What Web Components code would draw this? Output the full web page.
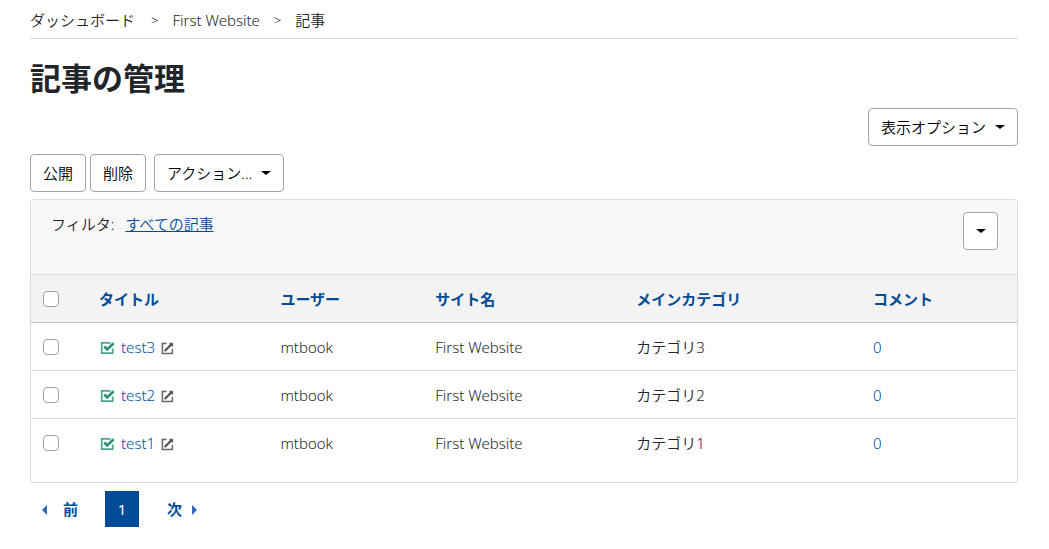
<!DOCTYPE html>
<html lang="ja">
<head>
<meta charset="utf-8">
<title>記事の管理</title>
<style>
  body {
    margin: 0;
    background: #fff;
    color: #212529;
    font: 350 15px/24px "Noto Sans", "Noto Sans CJK JP", sans-serif;
  }
</style>
</head>
<body>
<entry-page>
  <bread-crumbs slot="crumbs">
    <crumb-item href="#dashboard">ダッシュボード</crumb-item>
    <crumb-item href="#site">First Website</crumb-item>
    <crumb-item>記事</crumb-item>
  </bread-crumbs>
  <span slot="heading">記事の管理</span>
  <ui-button slot="options" caret>表示オプション</ui-button>
  <ui-button slot="actions">公開</ui-button>
  <ui-button slot="actions">削除</ui-button>
  <ui-button slot="actions" caret class="menu">アクション...</ui-button>
  <list-panel slot="list">
    <filter-bar slot="filter">すべての記事</filter-bar>
    <entry-table></entry-table>
  </list-panel>
  <page-nav slot="pager"></page-nav>
</entry-page>

<script>
  const define = (name, html, setup) => {
    const template = document.createElement('template');
    template.innerHTML = html;
    customElements.define(name, class extends HTMLElement {
      constructor() {
        super();
        this.attachShadow({ mode: 'open' }).append(template.content.cloneNode(true));
      }
      connectedCallback() {
        if (setup) setup(this, this.shadowRoot);
      }
    });
  };

  define('entry-page', `
    <style>
      :host { display: block; padding: 0 31px 20px 30px; }
      header { border-bottom: 1px solid #dcdcdc; padding: 8px 0 6px; }
      h1 { margin: 17px 0 7px; font-size: 31px; line-height: 45px; font-weight: 700; }
      .options { display: flex; justify-content: flex-end; margin-bottom: 8px; }
      .actions { display: flex; gap: 4px; margin-bottom: 7px; }
      ::slotted(.menu) { margin-left: 4px; }
      footer { margin-top: 8px; }
    </style>
    <header><slot name="crumbs"></slot></header>
    <main>
      <h1><slot name="heading"></slot></h1>
      <div class="options"><slot name="options"></slot></div>
      <div class="actions"><slot name="actions"></slot></div>
      <slot name="list"></slot>
    </main>
    <footer><slot name="pager"></slot></footer>`);

  define('bread-crumbs', `
    <style>
      :host { display: block; }
      nav { display: flex; }
    </style>
    <nav aria-label="パンくず"><slot></slot></nav>`);

  define('crumb-item', `
    <style>
      :host { display: flex; }
      a { color: inherit; text-decoration: none; }
      .sep { font-size: 13px; padding: 0 14px; }
      :host(:first-child) .sep { padding-left: 16px; }
      :host(:last-child) .sep { display: none; }
    </style>
    <a><slot></slot></a><span class="sep">&gt;</span>`,
    (host, root) => {
      if (host.hasAttribute('href')) root.querySelector('a').href = host.getAttribute('href');
    });

  define('ui-button', `
    <style>
      :host { display: block; }
      button {
        display: flex; align-items: center; justify-content: center; gap: 9px;
        height: 38px; min-width: 35px; padding: 0 12px; box-sizing: border-box;
        border: 1px solid #a6a6a6; border-radius: 4px;
        background: #fff; color: #000; font: inherit; white-space: nowrap; cursor: pointer;
      }
      .caret { display: none; border: 5px solid transparent; border-top: 4px solid #000; border-bottom: 0; }
      :host([caret]) .caret { display: block; }
      :host([icon]) button { padding: 0; }
      :host([icon]) slot { display: none; }
    </style>
    <button type="button"><slot></slot><span class="caret"></span></button>`,
    (host, root) => {
      const label = host.getAttribute('label');
      if (label) root.querySelector('button').setAttribute('aria-label', label);
    });

  define('list-panel', `
    <style>
      :host { display: block; border: 1px solid #dcdcdc; border-radius: 3px; overflow: hidden; padding-bottom: 16px; }
    </style>
    <slot name="filter"></slot>
    <slot></slot>`);

  define('filter-bar', `
    <style>
      :host {
        display: flex; justify-content: space-between; align-items: flex-start;
        background: #f7f7f7; padding: 12px 19px 24px 20px;
      }
      .filter { display: flex; gap: 11px; }
      a { color: #004b98; text-decoration: underline; }
    </style>
    <div class="filter"><span>フィルタ:</span><a href="#filter"><slot></slot></a></div>
    <ui-button caret icon label="フィルタを開く"></ui-button>`);

  define('check-box', `
    <style>
      :host { display: block; height: 16px; }
      input {
        appearance: none; display: block; width: 16px; height: 16px; margin: 0;
        box-sizing: border-box; border: 1px solid #a0a0a0; border-radius: 4px; background: #fff;
      }
      input:checked { background: #004b98; }
    </style>
    <input type="checkbox">`,
    (host, root) => {
      root.querySelector('input').setAttribute('aria-label', host.getAttribute('label'));
    });

  define('entry-table', `
    <style>
      :host { display: block; }
      table { width: 100%; border-collapse: separate; border-spacing: 0; table-layout: fixed; }
      th, td { height: 47px; padding: 0 0 0 12px; text-align: left; vertical-align: middle; border-bottom: 1px solid #dcdcdc; white-space: nowrap; }
      th { background: #f3f3f3; border-top: 1px solid #dcdcdc; border-bottom-color: #c4c4c4; font-weight: 700; }
      tr:last-child td { border-bottom: 0; }
      a { color: #004b98; text-decoration: none; }
      .title { display: flex; align-items: center; gap: 6px; padding-left: 1px; }
      svg { display: block; margin-top: 3px; }
      .c0 { width: 56px; } .c1 { width: 18.4%; } .c2 { width: 15.7%; }
      .c3 { width: 20.4%; } .c4 { width: 24%; }
    </style>
    <table>
      <colgroup><col class="c0"><col class="c1"><col class="c2"><col class="c3"><col class="c4"><col></colgroup>
      <thead><tr>
        <th><check-box label="すべて選択"></check-box></th>
        <th><a href="#title">タイトル</a></th>
        <th><a href="#user">ユーザー</a></th>
        <th><a href="#site">サイト名</a></th>
        <th><a href="#category">メインカテゴリ</a></th>
        <th><a href="#comment">コメント</a></th>
      </tr></thead>
      <tbody></tbody>
    </table>`,
    (host, root) => {
      const check = `<svg width="15" height="14" viewBox="0 0 15 14" fill="none" aria-hidden="true">
        <path d="M10.5 1.8H1.7v10.4h11.1V7.5" stroke="#4fa58f" stroke-width="1.7"/>
        <path d="M4.2 5.4l3 3L13.6 2.3" stroke="#2f8f77" stroke-width="2.8"/></svg>`;
      const edit = `<svg width="13" height="13" viewBox="0 0 13 13" fill="none" aria-hidden="true">
        <path d="M5.6 1.4H1.4v10h10V7M8.4 1.4h3v3" stroke="#666" stroke-width="1.5"/>
        <path d="M3.6 9.2l7.2-7.2" stroke="#444" stroke-width="1.9"/></svg>`;
      root.querySelector('tbody').innerHTML = [3, 2, 1].map(n => `<tr>
        <td><check-box label="test${n}を選択"></check-box></td>
        <td><div class="title">${check}<a href="#test${n}">test${n}</a><a href="#view${n}" aria-label="表示">${edit}</a></div></td>
        <td>mtbook</td>
        <td>First Website</td>
        <td>カテゴリ${n}</td>
        <td><a href="#comments${n}">0</a></td></tr>`).join('');
    });

  define('page-nav', `
    <style>
      :host { display: block; }
      nav { display: flex; line-height: 36px; }
      a { display: flex; align-items: center; color: #004b98; text-decoration: none; font-weight: 700; }
      .prev { gap: 16px; padding: 0 27px 0 12px; }
      .next { gap: 10px; padding-left: 28px; }
      .page { background: #004b98; color: #fff; width: 34px; justify-content: center; font-weight: 400; }
      .left, .right { border: 5px solid transparent; margin-top: 2px; }
      .left { border-left: 0; border-right-color: #3069b5; }
      .right { border-right: 0; border-left-color: #3069b5; }
    </style>
    <nav aria-label="ページ">
      <a class="prev" href="#prev"><span class="left"></span>前</a>
      <a class="page" href="#1" aria-current="page">1</a>
      <a class="next" href="#next">次<span class="right"></span></a>
    </nav>`);
</script>
</body>
</html>
